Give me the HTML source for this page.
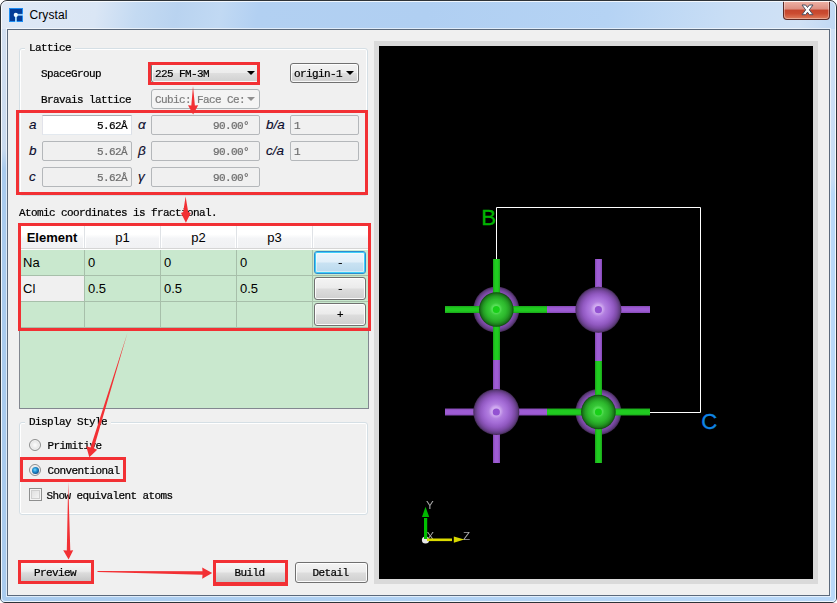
<!DOCTYPE html>
<html lang="en">
<head>
<meta charset="utf-8">
<title>Crystal</title>
<style>
html,body{margin:0;padding:0;}
body{width:837px;height:603px;overflow:hidden;background:#fff;position:relative;font-family:"Liberation Mono",monospace;font-size:12px;color:#000;}
.abs{position:absolute;}
#win{position:absolute;left:0;top:0;width:835px;height:601px;border:1px solid #2e3338;border-radius:7px 7px 5px 5px;
 background:linear-gradient(100deg,#dfe9f6 0px,#dae6f5 95px,#c4daf2 135px,#b9d3f0 175px,#c1d9f3 218px,#b2d0f2 255px,#b0cff2 420px,#b5d3f4 600px,#c9def5 720px,#d0e1f5 790px,#bdd6f3 835px);overflow:hidden;}
#win:after{content:"";position:absolute;left:0;top:0;right:0;bottom:0;border:1px solid rgba(255,255,255,.8);border-radius:6px 6px 4px 4px;pointer-events:none;}
#title{position:absolute;left:28.5px;top:6px;font-family:"Liberation Sans",sans-serif;font-size:12px;line-height:16px;color:#000;letter-spacing:0.1px;}
#client{position:absolute;left:6px;top:28px;width:821px;height:565px;border:1px solid #5b697b;background:#f0f0f0;box-shadow:0 0 0 1px rgba(255,255,255,.6);}
/* everything inside client uses page coords via #pg */
#pg{position:absolute;left:-8px;top:-30px;width:837px;height:603px;}
.mono{font-family:"Liberation Mono",monospace;font-size:11px;letter-spacing:-0.6px;line-height:14px;white-space:pre;color:#000;-webkit-text-stroke:0.22px currentColor;filter:grayscale(1);}
.grp{position:absolute;border:1px solid #d5dfe5;border-radius:3px;box-shadow:inset 0 0 0 1px #fff;}
.grp .lbl{position:absolute;left:5px;top:-8.5px;background:#f0f0f0;padding:0 4px;}
.combo{position:absolute;border:1px solid #707070;border-radius:3px;box-sizing:border-box;background:linear-gradient(#f3f3f3 0%,#ececec 48%,#dedede 52%,#d0d0d0 100%);box-shadow:inset 0 0 0 1px rgba(255,255,255,.85);}
.combo.dis{border-color:#adb2b5;background:#f4f4f4;box-shadow:none;color:#838383;}
.combo .tx{position:absolute;left:3px;top:3px;}
.combo .ar{position:absolute;right:4.5px;top:7px;width:0;height:0;border-left:4px solid transparent;border-right:4px solid transparent;border-top:4.5px solid #000;}
.combo.dis .ar{border-top-color:#8f8f8f;}
.combo.dis .tx{color:#7c7c7c;}
.inp{position:absolute;box-sizing:border-box;height:20px;border:1px solid #b4b7ba;border-radius:2px;background:#f0f0f0;}
.inp.en{background:#fff;border-color:#abadb3 #dbdfe6 #e3e9ef #e2e3ea;border-radius:0;}
.inp .tx{position:absolute;top:3px;color:#6d6d6d;}
.inp.en .tx{color:#000;}
.it{position:absolute;font-family:"Liberation Sans",sans-serif;font-style:italic;font-size:13.5px;line-height:16px;color:#0c0c2c;font-weight:normal;-webkit-text-stroke:0.15px #0c0c2c;}
.red{position:absolute;box-sizing:border-box;border:3px solid #f23034;}
.btn{position:absolute;box-sizing:border-box;border:1px solid #707070;border-radius:3px;background:linear-gradient(#f4f4f4 0%,#ebebeb 48%,#dddddd 52%,#cfcfcf 100%);box-shadow:inset 0 0 0 1px rgba(255,255,255,.9);text-align:center;}
.btn.hot{border-color:#2d8bd0;background:linear-gradient(#ecf5fb 0%,#e1eff9 48%,#c9e2f2 52%,#b9d9ee 100%);box-shadow:inset 0 0 0 1px #3fd0f8, inset 0 0 0 2px rgba(255,255,255,.45);}
.btn.flat{border:0;border-radius:0;box-shadow:none;background:linear-gradient(#f6f6f6 0%,#ececec 45%,#dcdcdc 55%,#c6c6c6 100%);}
.sans{font-family:"Liberation Sans",sans-serif;font-size:13px;line-height:16px;color:#000;}

.radio{width:12px;height:12px;box-sizing:border-box;border:1px solid #8e8f8f;border-radius:50%;background:radial-gradient(circle at 50% 50%,#fdfdfd 0%,#e9e9e9 50%,#d2d2d2 100%);box-shadow:inset 0 0 0 1px #f3f3f3;}
.radio.on:after{content:"";position:absolute;left:1.5px;top:1.5px;width:7px;height:7px;border-radius:50%;background:radial-gradient(circle at 42% 40%,#7fd4f7 0%,#2a9ddb 30%,#0d5593 70%,#163a66 100%);}
.chk{width:13px;height:13px;box-sizing:border-box;border:1px solid #8e8f8f;background:linear-gradient(135deg,#dcdcdc,#f8f8f8);box-shadow:inset 0 0 0 1px #f4f4f4, inset 0 0 0 2px #cfcfcf;}

#tpg{position:absolute;left:-20px;top:-225px;width:837px;height:603px;}
.vl{top:250px;width:1px;height:78px;background:#a7bfaa;}
.hl{left:20px;width:348px;height:1px;background:#a7bfaa;}
.hs{top:225px;width:1px;height:23px;background:#dfe2e6;box-shadow:-1px 0 0 #fff,1px 0 0 #fff;}
</style>
</head>
<body>
<div id="win">
  <svg class="abs" style="left:8px;top:7px" width="14" height="14" viewBox="0 0 14 14">
    <rect x="0" y="0" width="14" height="14" fill="#1c8cf2"/>
    <rect x="1" y="1" width="12" height="12" fill="#053d98"/>
    <rect x="6" y="7" width="1.8" height="7" fill="#a4dcff"/>
    <rect x="7" y="5.9" width="7" height="1.8" fill="#96d2ff"/>
    <circle cx="6.8" cy="6.9" r="2.1" fill="#f4fbff"/>
  </svg>
  <div id="title">Crystal</div>
  <div class="abs" id="close" style="left:782px;top:0;width:47px;height:19px;box-sizing:border-box;border:1px solid #5b2a26;border-top:0;border-radius:0 0 4px 4px;background:linear-gradient(#efb3a7 0%,#dc8f81 45%,#c5452d 50%,#cb4c31 70%,#de7c5c 100%);box-shadow:inset 0 0 0 1px rgba(255,255,255,.35);">
    <svg class="abs" style="left:17px;top:3px" width="13" height="12" viewBox="0 0 13 12">
      <path d="M1 1 L4.6 1 L6.5 3.5 L8.4 1 L12 1 L8.3 5.85 L12 10.7 L8.4 10.7 L6.5 8.2 L4.6 10.7 L1 10.7 L4.7 5.85 Z" fill="#fff" stroke="#4a5062" stroke-width="1" stroke-linejoin="round"/>
    </svg>
  </div>
  <div class="abs" style="left:0;top:28px;width:7px;height:573px;background:linear-gradient(180deg,#d2dff0 0px,#c9daee 120px,#a9cbee 140px,#a9cbee 100%);"></div>
  <div class="abs" style="left:828px;top:28px;width:7px;height:573px;background:linear-gradient(180deg,#cfe0f5 0px,#c8dcf4 150px,#b9d8f8 165px,#b9d8f8 100%);"></div>
  <div class="abs" style="left:0;top:594px;width:835px;height:7px;background:linear-gradient(90deg,#a9cbee 0px,#b9d8f8 100%);"></div>
  <div id="client"><div id="pg">

    <!-- Lattice group -->
    <div class="grp" style="left:19px;top:48px;width:347px;height:146px;"><span class="lbl mono">Lattice</span></div>
    <div class="abs mono" style="left:41px;top:67px;">SpaceGroup</div>
    <div class="abs mono" style="left:41px;top:93px;">Bravais lattice</div>
    <div class="combo" style="left:151px;top:63px;width:109px;height:20px;"><span class="tx mono">225 FM-3M</span><span class="ar"></span></div>
    <div class="combo" style="left:290px;top:63px;width:69px;height:20px;"><span class="tx mono">origin-1</span><span class="ar"></span></div>
    <div class="combo dis" style="left:151px;top:89px;width:109px;height:20px;"><span class="tx mono">Cubic: Face Ce:</span><span class="ar"></span></div>

    <div class="it" style="left:29px;top:117px;">a</div>
    <div class="it" style="left:29px;top:143px;">b</div>
    <div class="it" style="left:29px;top:169px;">c</div>
    <div class="inp en" style="left:42px;top:115px;width:90px;"><span class="tx mono" style="right:4px;">5.62Å</span></div>
    <div class="inp" style="left:42px;top:141px;width:90px;"><span class="tx mono" style="right:4px;">5.62Å</span></div>
    <div class="inp" style="left:42px;top:167px;width:90px;"><span class="tx mono" style="right:4px;">5.62Å</span></div>
    <div class="it" style="left:138px;top:117px;">α</div>
    <div class="it" style="left:138px;top:143px;">β</div>
    <div class="it" style="left:138px;top:169px;">γ</div>
    <div class="inp" style="left:151px;top:115px;width:109px;"><span class="tx mono" style="right:10px;">90.00°</span></div>
    <div class="inp" style="left:151px;top:141px;width:109px;"><span class="tx mono" style="right:10px;">90.00°</span></div>
    <div class="inp" style="left:151px;top:167px;width:109px;"><span class="tx mono" style="right:10px;">90.00°</span></div>
    <div class="it" style="left:266px;top:117px;">b/a</div>
    <div class="it" style="left:266px;top:143px;">c/a</div>
    <div class="inp" style="left:290px;top:115px;width:69px;"><span class="tx mono" style="left:3px;">1</span></div>
    <div class="inp" style="left:290px;top:141px;width:69px;"><span class="tx mono" style="left:3px;">1</span></div>

    <div class="abs mono" style="left:19px;top:206px;">Atomic coordinates is fractional.</div>

    <!-- table -->
    <div class="abs" id="tbl" style="left:19px;top:224px;width:350px;height:185px;box-sizing:border-box;border:1px solid #828790;background:#c9e8ce;overflow:hidden;">
      <div id="tpg">
        <div class="abs" style="left:20px;top:225px;width:348px;height:23px;background:linear-gradient(#ffffff 0%,#ffffff 40%,#f3f4f6 60%,#f0f1f3 100%);"></div>
        <div class="abs" style="left:20px;top:248px;width:348px;height:1px;background:#d5d5d5;"></div>
        <div class="abs" style="left:20px;top:249px;width:348px;height:1px;background:#fdfefd;"></div>
        <div class="abs hs" style="left:84px;"></div><div class="abs hs" style="left:160px;"></div><div class="abs hs" style="left:236px;"></div><div class="abs hs" style="left:312px;"></div>
        <div class="abs sans" style="left:20px;top:230px;width:64px;text-align:center;font-weight:bold;">Element</div>
        <div class="abs sans" style="left:85px;top:230px;width:75px;text-align:center;">p1</div>
        <div class="abs sans" style="left:161px;top:230px;width:75px;text-align:center;">p2</div>
        <div class="abs sans" style="left:237px;top:230px;width:75px;text-align:center;">p3</div>
        <div class="abs" style="left:20px;top:276px;width:64px;height:25px;background:#f0f0f0;"></div>
        <div class="abs vl" style="left:84px;"></div><div class="abs vl" style="left:160px;"></div><div class="abs vl" style="left:236px;"></div><div class="abs vl" style="left:312px;"></div>
        <div class="abs hl" style="top:275px;"></div><div class="abs hl" style="top:301px;"></div><div class="abs hl" style="top:327px;"></div>
        <div class="abs sans" style="left:23px;top:255px;">Na</div>
        <div class="abs sans" style="left:88px;top:255px;">0</div>
        <div class="abs sans" style="left:164px;top:255px;">0</div>
        <div class="abs sans" style="left:240px;top:255px;">0</div>
        <div class="abs sans" style="left:23px;top:281px;">Cl</div>
        <div class="abs sans" style="left:88px;top:281px;">0.5</div>
        <div class="abs sans" style="left:164px;top:281px;">0.5</div>
        <div class="abs sans" style="left:240px;top:281px;">0.5</div>
        <div class="btn hot" style="left:314px;top:251px;width:52px;height:23px;"><span class="mono" style="position:relative;top:4px;">-</span></div>
        <div class="btn" style="left:314px;top:277px;width:52px;height:23px;"><span class="mono" style="position:relative;top:4px;">-</span></div>
        <div class="btn" style="left:314px;top:303px;width:52px;height:23px;"><span class="mono" style="position:relative;top:4px;">+</span></div>
      </div>
    </div>

    <!-- Display style group -->
    <div class="grp" style="left:19px;top:422px;width:347px;height:91px;"><span class="lbl mono">Display Style</span></div>
    <div class="abs radio" style="left:29px;top:439px;"></div>
    <div class="abs mono" style="left:47.5px;top:438.5px;">Primitive</div>
    <div class="abs radio on" style="left:29px;top:464px;"></div>
    <div class="abs mono" style="left:47.5px;top:463.8px;">Conventional</div>
    <div class="abs chk" style="left:29px;top:488px;"></div>
    <div class="abs mono" style="left:46.5px;top:488.5px;">Show equivalent atoms</div>

    <!-- bottom buttons -->
    <div class="btn flat" style="left:21px;top:563px;width:70px;height:18px;"><span class="mono" style="position:relative;top:3px;left:-1px;">Preview</span></div>
    <div class="btn flat" style="left:216px;top:563px;width:69px;height:19px;"><span class="mono" style="position:relative;top:3px;left:-1px;">Build</span></div>
    <div class="btn" style="left:295px;top:562px;width:73px;height:21px;"><span class="mono" style="position:relative;top:3px;left:-1px;">Detail</span></div>

    <!-- viewport -->
    <div class="abs" style="left:374px;top:41px;width:444px;height:543px;background:#dadada;"></div>
    <div class="abs" style="left:379px;top:46px;width:434px;height:533px;background:#000;"></div>
    <svg class="abs" style="left:379px;top:46px;" width="434" height="533" viewBox="379 46 434 533">
      <defs>
        <radialGradient id="gp" cx="0.5" cy="0.5" r="0.5" fx="0.49" fy="0.48">
          <stop offset="0" stop-color="#e2ccf5"/><stop offset="0.2" stop-color="#cda6ee"/><stop offset="0.32" stop-color="#b27fe0"/><stop offset="0.5" stop-color="#a46cd6"/><stop offset="0.68" stop-color="#9159c1"/><stop offset="0.82" stop-color="#7a49a3"/><stop offset="0.93" stop-color="#5e3b7e"/><stop offset="1" stop-color="#3e274d"/>
        </radialGradient>
        <radialGradient id="gg" cx="0.5" cy="0.5" r="0.5" fx="0.49" fy="0.48">
          <stop offset="0" stop-color="#7cec7c"/><stop offset="0.25" stop-color="#52dc52"/><stop offset="0.36" stop-color="#38c838"/><stop offset="0.58" stop-color="#2db92d"/><stop offset="0.76" stop-color="#249c24"/><stop offset="0.9" stop-color="#1a761a"/><stop offset="1" stop-color="#0f450f"/>
        </radialGradient>
        <linearGradient id="bpv" x1="0" x2="1" y1="0" y2="0"><stop offset="0" stop-color="#8449b4"/><stop offset="0.3" stop-color="#9e5cd4"/><stop offset="0.7" stop-color="#9e5cd4"/><stop offset="1" stop-color="#8449b4"/></linearGradient>
        <linearGradient id="bph" x1="0" x2="0" y1="0" y2="1"><stop offset="0" stop-color="#8449b4"/><stop offset="0.3" stop-color="#9e5cd4"/><stop offset="0.7" stop-color="#9e5cd4"/><stop offset="1" stop-color="#8449b4"/></linearGradient>
        <linearGradient id="bgv" x1="0" x2="1" y1="0" y2="0"><stop offset="0" stop-color="#1aa41a"/><stop offset="0.3" stop-color="#20cc20"/><stop offset="0.7" stop-color="#20cc20"/><stop offset="1" stop-color="#1aa41a"/></linearGradient>
        <linearGradient id="bgh" x1="0" x2="0" y1="0" y2="1"><stop offset="0" stop-color="#1aa41a"/><stop offset="0.3" stop-color="#20cc20"/><stop offset="0.7" stop-color="#20cc20"/><stop offset="1" stop-color="#1aa41a"/></linearGradient>
      </defs>
      <!-- cell -->
      <path d="M496.5 259 V207.5 H700.5 V412.5 H650" fill="none" stroke="#fff" stroke-width="1"/>
      <!-- back atoms -->
      <circle cx="496.3" cy="309.5" r="23" fill="url(#gp)"/>
      <circle cx="598.4" cy="412" r="23" fill="url(#gp)"/>
      <!-- bonds -->
      <rect x="547" y="306" width="103" height="7" fill="url(#bph)"/>
      <rect x="595" y="259" width="7" height="102" fill="url(#bpv)"/>
      <rect x="445" y="408.5" width="102" height="7" fill="url(#bph)"/>
      <rect x="493" y="360" width="7" height="103" fill="url(#bpv)"/>
      <rect x="445" y="306" width="102" height="7" fill="url(#bgh)"/>
      <rect x="493" y="259" width="7" height="101" fill="url(#bgv)"/>
      <rect x="547" y="408.5" width="103" height="7" fill="url(#bgh)"/>
      <rect x="595" y="361" width="7" height="102" fill="url(#bgv)"/>
      <!-- atoms -->
      <circle cx="598.4" cy="309.7" r="23" fill="url(#gp)"/>
      <circle cx="496.3" cy="412" r="23" fill="url(#gp)"/>
      <circle cx="496.3" cy="309.5" r="17.3" fill="url(#gg)"/>
      <circle cx="598.4" cy="412" r="17.3" fill="url(#gg)"/>
      <circle cx="598.4" cy="309.7" r="3.6" fill="#9352d2"/>
      <circle cx="496.3" cy="412" r="3.6" fill="#9352d2"/>
      <circle cx="496.3" cy="309.5" r="3.5" fill="#18d018"/>
      <circle cx="598.4" cy="412" r="3.5" fill="#18d018"/>
      <text x="481.3" y="224.9" font-family="Liberation Sans, sans-serif" font-size="22.4" fill="#00b400" stroke="#00b400" stroke-width="0.3">B</text>
      <text x="701.2" y="429.3" font-family="Liberation Sans, sans-serif" font-size="22.2" fill="#0f84e4" stroke="#0f84e4" stroke-width="0.3">C</text>
      <!-- axes -->
      <circle cx="425.5" cy="540" r="3.6" fill="#e8e8e8"/>
      <g style="filter:grayscale(1)">
      <text x="426" y="508.8" font-family="Liberation Sans, sans-serif" font-size="11.6" fill="#a8a8a8">Y</text>
      <text x="426.6" y="540" font-family="Liberation Sans, sans-serif" font-size="11.4" fill="#a8a8a8">X</text>
      <text x="463" y="540" font-family="Liberation Sans, sans-serif" font-size="11.6" fill="#a8a8a8">Z</text>
      </g>
      <rect x="427" y="538.5" width="25" height="2.6" fill="#dcdc00"/>
      <path d="M453.8 536.6 L464.3 539.6 L453.8 542.8 Z" fill="#d8d800"/>
      <rect x="424" y="518" width="3.2" height="21" fill="#00c000"/>
      <path d="M422 517 L425.5 506.8 L429.2 517 Z" fill="#00b800"/>
    </svg>

    <!-- red annotations -->
    <div class="red" style="left:148px;top:62px;width:112px;height:23px;"></div>
    <div class="red" style="left:16px;top:110px;width:351.5px;height:85px;"></div>
    <div class="red" style="left:18px;top:223px;width:353px;height:108px;"></div>
    <div class="red" style="left:20px;top:457px;width:106px;height:25px;"></div>
    <div class="red" style="left:18px;top:560px;width:76px;height:24px;"></div>
    <div class="red" style="left:213px;top:560px;width:75px;height:26px;border-bottom-width:4px;"></div>
    <svg class="abs" style="left:0;top:0;" width="837" height="603" viewBox="0 0 837 603">
      <g fill="#f23034">
        <path d="M193 86 L194.9 105.4 L198.2 105.2 L193.1 114.6 L188 105.2 L191.3 105.4 Z"/>
        <path d="M185.6 196.5 L188.2 212 L190.8 213 L185.9 222.8 L181 213 L183.2 212 Z"/>
        <path d="M127.4 333 L93.8 448.2 L97.2 449.8 L89.3 457.2 L86.2 446.2 L90.5 447.4 Z"/>
        <path d="M68.2 482 L70.3 550.4 L73.2 550.3 L68.6 559.6 L63.2 550.3 L66.8 550.4 Z"/>
        <path d="M97.5 571 L202.5 571.3 L202.2 567.5 L212.2 573 L202.2 578.8 L202.5 574.8 L97.5 572 Z"/>
      </g>
    </svg>

  </div></div>
</div>
</body>
</html>
